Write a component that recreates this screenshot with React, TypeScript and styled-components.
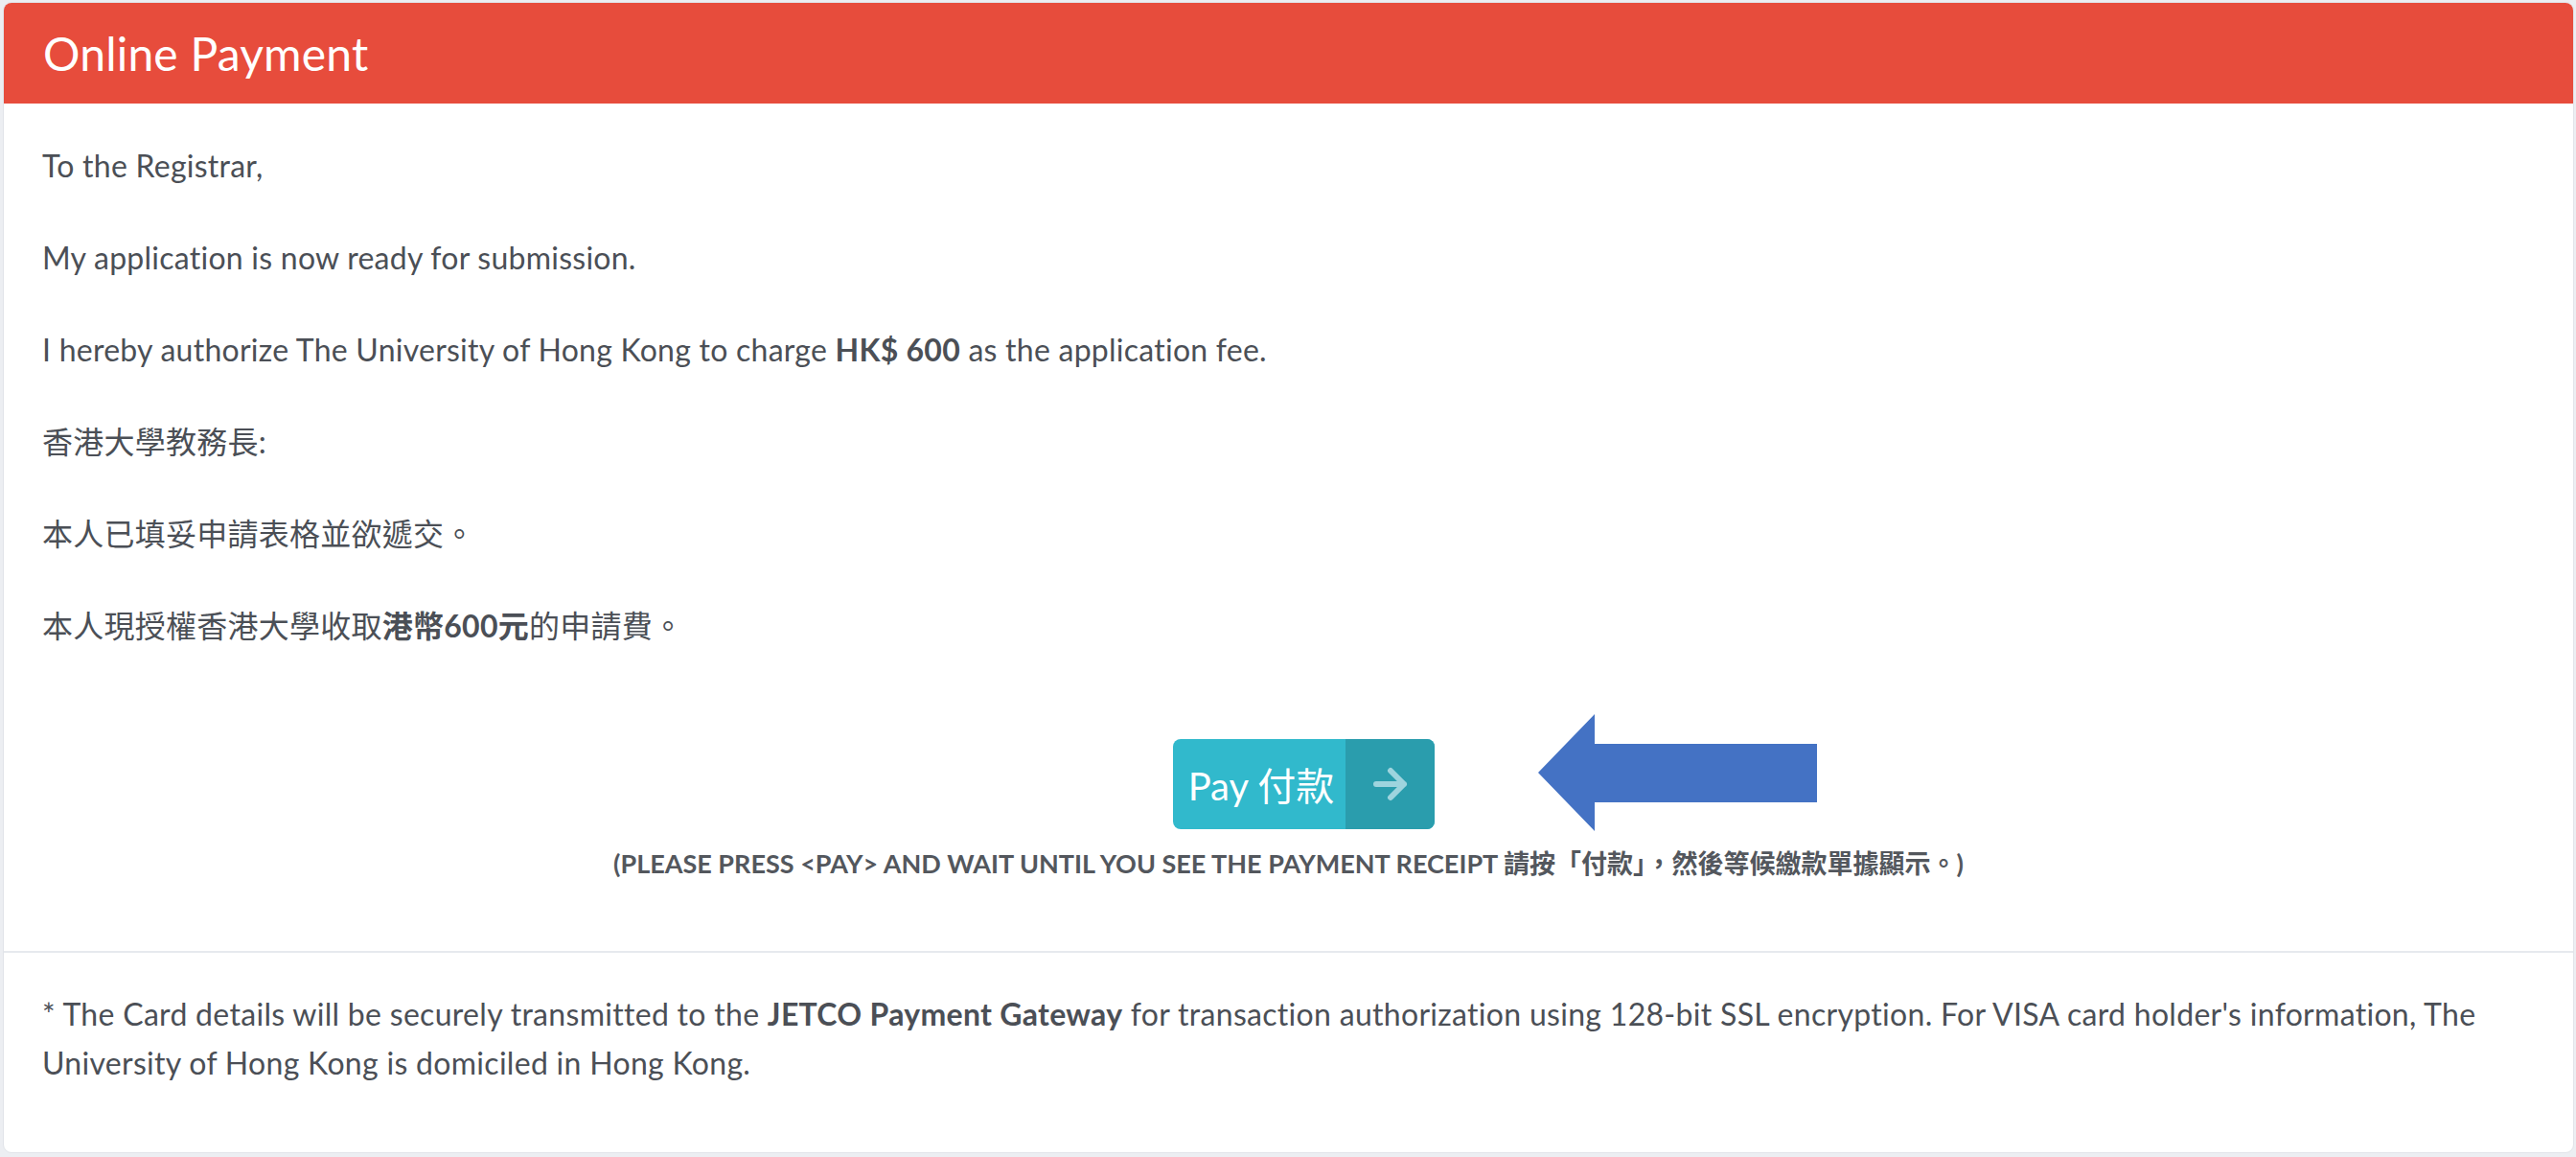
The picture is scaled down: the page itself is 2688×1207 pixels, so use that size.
import React from "react";
import styled, { createGlobalStyle } from "styled-components";

const GlobalStyle = createGlobalStyle`
  html, body {
    margin: 0;
    padding: 0;
    background: #eceef2;
  }
  body {
    font-family: Lato, "Noto Sans CJK TC", sans-serif;
    color: #4b4f56;
  }
  * { box-sizing: border-box; }
`;

const Page = styled.div`
  padding: 2px 2px 4px 3px;
`;

const Card = styled.section`
  background: #ffffff;
  border: 1px solid #e1e4e9;
  border-radius: 9px;
  overflow: hidden;
`;

const Header = styled.header`
  height: 105px;
  background: #e74c3c;
  display: flex;
  align-items: center;
  padding-left: 41px;
`;

const Title = styled.h1`
  margin: 0;
  font-family: Lato, "Noto Sans CJK TC", sans-serif;
  font-weight: 400;
  font-size: 48px;
  color: #ffffff;
  letter-spacing: 0.2px;
`;

const Body = styled.div`
  padding: 41px 40px 70px 40px;
`;

const Para = styled.p`
  margin: 0 0 48px 0;
  font-size: 32px;
  line-height: 48px;
  letter-spacing: 0.25px;
  color: #4b4f56;
`;

const ActionRow = styled.div`
  display: flex;
  justify-content: center;
  padding-top: 46px;
`;

const ButtonAnchor = styled.div`
  position: relative;
  margin-left: 32px;
`;

const PayButton = styled.button`
  display: flex;
  align-items: stretch;
  height: 94px;
  padding: 0;
  border: none;
  border-radius: 8px;
  overflow: hidden;
  background: #31b9cc;
  cursor: pointer;
`;

const PayLabel = styled.span`
  display: flex;
  align-items: center;
  padding: 0 12px 0 16px;
  font-family: Lato, "Noto Sans CJK TC", sans-serif;
  font-size: 40px;
  color: #ffffff;
`;

const PayIcon = styled.span`
  display: flex;
  align-items: center;
  justify-content: center;
  width: 93px;
  background: #2a9dad;
`;

const Pointer = styled.svg`
  position: absolute;
  left: calc(100% + 108px);
  top: -26px;
`;

const Note = styled.p`
  margin: 15px 0 0 0;
  text-align: center;
  font-size: 27px;
  line-height: 42px;
  font-weight: 700;
  color: #53575d;
`;

const Footer = styled.div`
  border-top: 2px solid #e6e9ee;
  padding: 38px 40px 68px 40px;
`;

const FooterText = styled.p`
  margin: 0;
  font-size: 32px;
  line-height: 51px;
  letter-spacing: 0.3px;
  color: #4b4f56;
`;

export default function App() {
  return (
    <>
      <GlobalStyle />
      <Page>
        <Card>
          <Header>
            <Title>Online Payment</Title>
          </Header>
          <Body>
            <Para>To the Registrar,</Para>
            <Para>My application is now ready for submission.</Para>
            <Para>
              I hereby authorize The University of Hong Kong to charge <b>HK$ 600</b> as the
              application fee.
            </Para>
            <Para>香港大學教務長:</Para>
            <Para>本人已填妥申請表格並欲遞交。</Para>
            <Para>
              本人現授權香港大學收取<b>港幣600元</b>的申請費。
            </Para>
            <ActionRow>
              <ButtonAnchor>
                <PayButton type="button">
                  <PayLabel>Pay 付款</PayLabel>
                  <PayIcon>
                    <svg width="38" height="36" viewBox="0 0 38 36">
                      <path
                        d="M4 18H33M19 4L33 18L19 32"
                        fill="none"
                        stroke="#9ed4de"
                        strokeWidth="6"
                        strokeLinecap="round"
                        strokeLinejoin="round"
                      />
                    </svg>
                  </PayIcon>
                </PayButton>
                <Pointer width="292" height="122" viewBox="0 0 292 122">
                  <polygon
                    points="0,61 59,0 59,31 291,31 291,92 59,92 59,122"
                    fill="#4472c4"
                  />
                </Pointer>
              </ButtonAnchor>
            </ActionRow>
            <Note>
              (PLEASE PRESS &lt;PAY&gt; AND WAIT UNTIL YOU SEE THE PAYMENT RECEIPT 請按「付款」，然後等候繳款單據顯示。)
            </Note>
          </Body>
          <Footer>
            <FooterText>
              * The Card details will be securely transmitted to the <b>JETCO Payment Gateway</b> for
              transaction authorization using 128-bit SSL encryption. For VISA card holder's
              information, The University of Hong Kong is domiciled in Hong Kong.
            </FooterText>
          </Footer>
        </Card>
      </Page>
    </>
  );
}
